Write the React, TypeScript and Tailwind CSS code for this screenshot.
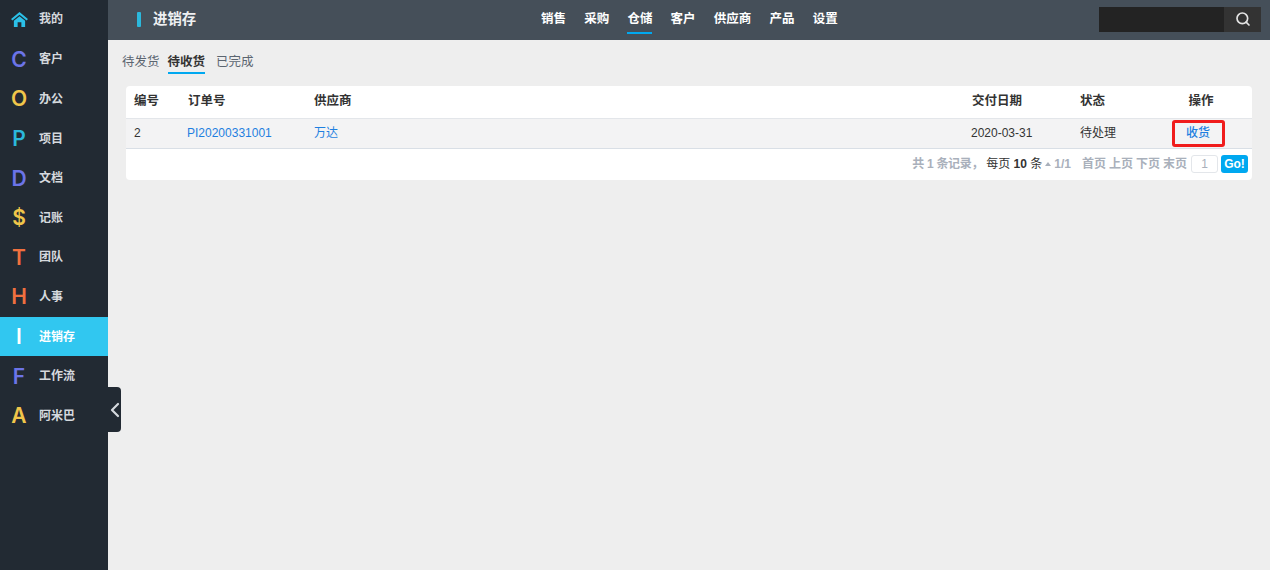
import { ChevronLeft, Search } from "lucide-react";

const menu = [
  { letter: "C", label: "客户", color: "text-[#6c74e8]" },
  { letter: "O", label: "办公", color: "text-[#f0c64a]" },
  { letter: "P", label: "项目", color: "text-[#2bb8dc]" },
  { letter: "D", label: "文档", color: "text-[#6c74e8]" },
  { letter: "$", label: "记账", color: "text-[#f0c64a]" },
  { letter: "T", label: "团队", color: "text-[#f0703f]" },
  { letter: "H", label: "人事", color: "text-[#f0703f]" },
  { letter: "I", label: "进销存", color: "text-white", active: true },
  { letter: "F", label: "工作流", color: "text-[#6c74e8]" },
  { letter: "A", label: "阿米巴", color: "text-[#f0c64a]" },
];

const nav = ["销售", "采购", "仓储", "客户", "供应商", "产品", "设置"];
const pageLinks = ["首页", "上页", "下页", "末页"];

function HomeIcon() {
  return (
    <svg width="17" height="15" viewBox="0 0 18 16" className="text-[#2bc0e8]" fill="currentColor">
      <path d="M9 0 L18 7.4 L16.6 9 L9 2.8 L1.4 9 L0 7.4 Z" />
      <path d="M9 4.4 L15 9.2 V16 H11 V11 H7 V16 H3 V9.2 Z" />
    </svg>
  );
}

function Sidebar() {
  return (
    <aside className="relative w-[108px] shrink-0 bg-[#222a33]">
      <div className="flex h-[39.6px] items-center pb-[1px]">
        <span className="flex w-[39px] justify-center">
          <HomeIcon />
        </span>
        <span className="text-xs font-bold text-[#d5d9de]">我的</span>
      </div>
      {menu.map((item) => (
        <div
          key={item.label}
          className={`flex h-[39.6px] items-center ${item.active ? "bg-[#31c7f0]" : ""}`}
        >
          <span className={`w-[38px] text-center font-['Inter',sans-serif] text-[21px] leading-none font-semibold ${item.color}`}>
            {item.letter}
          </span>
          <span className={`ml-[1px] text-xs font-bold ${item.active ? "text-white" : "text-[#d5d9de]"}`}>
            {item.label}
          </span>
        </div>
      ))}
      <div className="absolute top-[387px] left-[108px] flex h-[45px] w-[13px] items-center justify-center rounded-r-[4px] bg-[#222a33]">
        <ChevronLeft size={24} strokeWidth={2.2} className="shrink-0 text-[#d5d9de]" />
      </div>
    </aside>
  );
}

function Topbar() {
  return (
    <header className="flex h-10 shrink-0 items-center bg-[#454f59]">
      <div className="flex w-[433px] items-center pl-[29px]">
        <span className="h-[15px] w-[4px] rounded-[1px] bg-[#2bb8dc]" />
        <span className="ml-3 text-[14.4px] font-bold text-[#eef0f2]">进销存</span>
      </div>
      <nav className="flex h-full gap-[18.2px] self-start">
        {nav.map((n) => (
          <span
            key={n}
            className={`flex h-[34px] items-center border-b-2 pt-[7px] text-[12.5px] font-bold text-white ${n === "仓储" ? "border-[#00a8f0]" : "border-transparent"}`}
          >
            {n}
          </span>
        ))}
      </nav>
      <div className="mr-[9px] mb-[2px] ml-auto flex h-[25px] w-[162px]">
        <div className="flex-1 bg-[#232323]" />
        <div className="flex w-[37px] items-center justify-center bg-[#333333]">
          <Search size={16} strokeWidth={2.5} className="text-[#e5e5e5]" />
        </div>
      </div>
    </header>
  );
}

function OrderTable() {
  return (
    <div className="mx-[18px] mt-3 rounded-[4px] bg-white text-xs text-[#333]">
      <table className="w-full table-fixed border-collapse">
        <colgroup>
          <col className="w-[54px]" />
          <col className="w-[126px]" />
          <col />
          <col className="w-[108px]" />
          <col className="w-[78px]" />
          <col className="w-[102px]" />
        </colgroup>
        <thead>
          <tr className="h-[32px] border-b border-[#e3e6ea] text-left text-[12.5px] font-bold">
            <th className="pb-[1px] pl-2">编号</th>
            <th className="pb-[1px] pl-2">订单号</th>
            <th className="pb-[1px] pl-2">供应商</th>
            <th className="pb-[1px] pl-2">交付日期</th>
            <th className="pb-[1px] pl-2">状态</th>
            <th className="pb-[1px] text-center">操作</th>
          </tr>
        </thead>
        <tbody>
          <tr className="h-[30px] border-b border-[#d9dfe6] bg-[#f3f3f4]">
            <td className="pb-[1px] pl-2">2</td>
            <td className="pb-[1px] pl-[7px] text-[#1e7fe0]">PI20200331001</td>
            <td className="pb-[1px] pl-2 text-[#1e7fe0]">万达</td>
            <td className="pb-[1px] pl-[7px]">2020-03-31</td>
            <td className="pb-[1px] pl-2">待处理</td>
            <td className="text-center">
              <span className="mr-[6px] inline-flex h-[27px] w-[53px] items-center justify-center rounded-[3px] border-[3px] border-[#f01c1c] font-medium text-[#1e7fe0]">
                收货
              </span>
            </td>
          </tr>
        </tbody>
      </table>
      <div className="flex h-[31px] items-center justify-end pr-[4px] pb-[1px] text-xs font-bold text-[#a9b0bb]">
        <span className="tracking-[-0.3px]">共 1 条记录，</span>
        <span className="ml-[3px] font-normal text-[#333]">
          每页 <b>10</b> 条
        </span>
        <span className="mx-[3px] h-0 w-0 border-x-[3px] border-b-[4px] border-x-transparent border-b-[#a9b0bb]" />
        <span>1/1</span>
        <span className="ml-[11px] flex gap-[3px]">
          {pageLinks.map((p) => (
            <span key={p}>{p}</span>
          ))}
        </span>
        <span className="ml-1 flex h-[18px] w-[27px] items-center justify-center rounded-[3px] border border-[#e3e6ea] font-normal">
          1
        </span>
        <span className="ml-[3px] flex h-[18px] w-[27px] items-center justify-center rounded-[3px] bg-[#00a8f0] text-white">
          Go!
        </span>
      </div>
    </div>
  );
}

export default function App() {
  return (
    <div className="flex h-[570px] w-[1270px] overflow-hidden font-['Liberation_Sans','Noto_Sans_CJK_SC',sans-serif]">
      <Sidebar />
      <main className="flex min-w-0 flex-1 flex-col bg-[#eeeeee]">
        <Topbar />
        <div className="mt-3 ml-[14px] flex h-[22px] gap-2 text-[12.5px] text-[#5b6570]">
          <span className="flex items-center pb-[2px]">待发货</span>
          <span className="flex items-center border-b-2 border-[#00a8f0] font-bold text-[#333]">待收货</span>
          <span className="ml-[3px] flex items-center pb-[2px]">已完成</span>
        </div>
        <OrderTable />
      </main>
    </div>
  );
}
